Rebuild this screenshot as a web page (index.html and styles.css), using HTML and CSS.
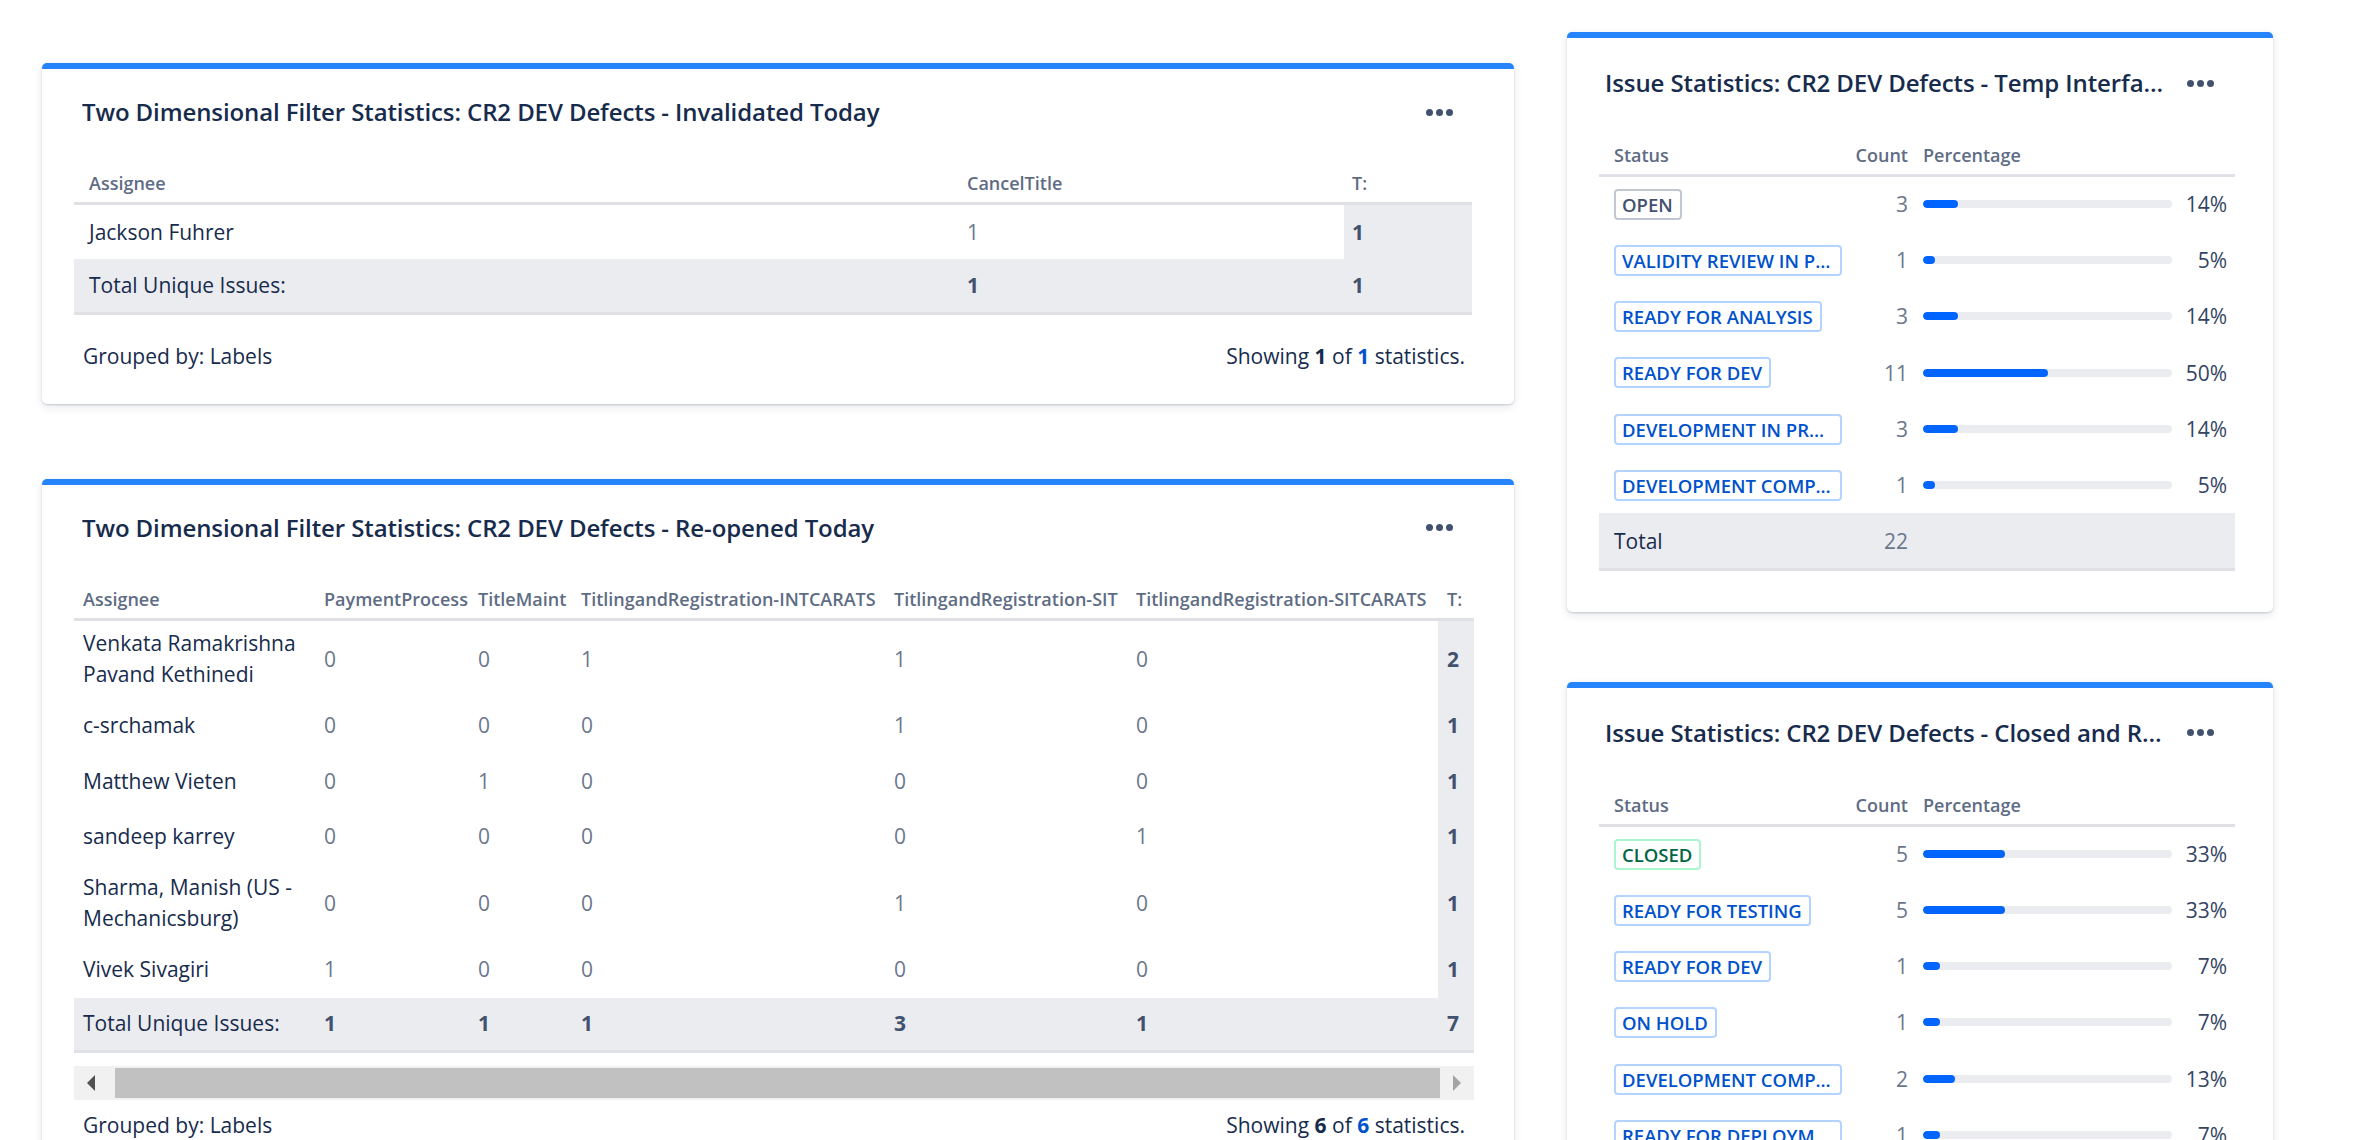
FILE: index.html
```html
<!DOCTYPE html>
<html lang="en">
<head>
<meta charset="utf-8">
<title>Dashboard</title>
<link rel="stylesheet" href="styles.css">
</head>
<body>
<div class="page">
  <div class="col col-left">
    <section class="card">
      <header class="card-head">
        <h2 class="card-title">Two Dimensional Filter Statistics: CR2 DEV Defects - Invalidated Today</h2>
        <span class="menu"><i></i><i></i><i></i></span>
      </header>
      <table class="tds tds-a">
        <colgroup><col class="a1"><col class="a2"><col class="a3"></colgroup>
        <thead>
          <tr><th>Assignee</th><th>CancelTitle</th><th class="t">T:</th></tr>
        </thead>
        <tbody>
          <tr><td class="name">Jackson Fuhrer</td><td class="num">1</td><td class="tot">1</td></tr>
          <tr class="total-row"><td class="name">Total Unique Issues:</td><td class="tot">1</td><td class="tot">1</td></tr>
        </tbody>
      </table>
      <div class="card-foot">
        <span>Grouped by: Labels</span>
        <span>Showing <b>1</b> of <b class="blue">1</b> statistics.</span>
      </div>
    </section>

    <section class="card">
      <header class="card-head">
        <h2 class="card-title">Two Dimensional Filter Statistics: CR2 DEV Defects - Re-opened Today</h2>
        <span class="menu"><i></i><i></i><i></i></span>
      </header>
      <table class="tds tds-b">
        <colgroup><col class="b1"><col class="b2"><col class="b3"><col class="b4"><col class="b5"><col class="b6"><col class="b7"></colgroup>
        <thead>
          <tr><th>Assignee</th><th>PaymentProcess</th><th>TitleMaint</th><th>TitlingandRegistration-INTCARATS</th><th>TitlingandRegistration-SIT</th><th>TitlingandRegistration-SITCARATS</th><th class="t">T:</th></tr>
        </thead>
        <tbody>
          <tr class="two"><td class="name">Venkata Ramakrishna Pavand Kethinedi</td><td class="num">0</td><td class="num">0</td><td class="num">1</td><td class="num">1</td><td class="num">0</td><td class="tot">2</td></tr>
          <tr><td class="name">c-srchamak</td><td class="num">0</td><td class="num">0</td><td class="num">0</td><td class="num">1</td><td class="num">0</td><td class="tot">1</td></tr>
          <tr><td class="name">Matthew Vieten</td><td class="num">0</td><td class="num">1</td><td class="num">0</td><td class="num">0</td><td class="num">0</td><td class="tot">1</td></tr>
          <tr><td class="name">sandeep karrey</td><td class="num">0</td><td class="num">0</td><td class="num">0</td><td class="num">0</td><td class="num">1</td><td class="tot">1</td></tr>
          <tr class="two"><td class="name">Sharma, Manish (US - Mechanicsburg)</td><td class="num">0</td><td class="num">0</td><td class="num">0</td><td class="num">1</td><td class="num">0</td><td class="tot">1</td></tr>
          <tr><td class="name">Vivek Sivagiri</td><td class="num">1</td><td class="num">0</td><td class="num">0</td><td class="num">0</td><td class="num">0</td><td class="tot">1</td></tr>
          <tr class="total-row"><td class="name">Total Unique Issues:</td><td class="tot">1</td><td class="tot">1</td><td class="tot">1</td><td class="tot">3</td><td class="tot">1</td><td class="tot">7</td></tr>
        </tbody>
      </table>
      <div class="hscroll">
        <span class="sb-btn sb-left"><i></i></span>
        <span class="sb-thumb"></span>
        <span class="sb-btn sb-right"><i></i></span>
      </div>
      <div class="card-foot card-foot-b">
        <span>Grouped by: Labels</span>
        <span>Showing <b>6</b> of <b class="blue">6</b> statistics.</span>
      </div>
    </section>
  </div>

  <div class="col col-right">
    <section class="card card-stats">
      <header class="card-head">
        <h2 class="card-title">Issue Statistics: CR2 DEV Defects - Temp Interface Defects</h2>
        <span class="menu"><i></i><i></i><i></i></span>
      </header>
      <table class="stats">
        <colgroup><col class="s1"><col class="s2"><col class="s3"></colgroup>
        <thead>
          <tr><th>Status</th><th class="cnt">Count</th><th class="pct">Percentage</th></tr>
        </thead>
        <tbody>
          <tr><td><span class="loz loz-grey">Open</span></td><td class="cnt">3</td><td class="pct"><div class="pbar"><span class="track"><span class="fill" style="width:14%"></span></span><span class="pv">14%</span></div></td></tr>
          <tr><td><span class="loz">Validity Review in Progress</span></td><td class="cnt">1</td><td class="pct"><div class="pbar"><span class="track"><span class="fill" style="width:5%"></span></span><span class="pv">5%</span></div></td></tr>
          <tr><td><span class="loz">Ready for Analysis</span></td><td class="cnt">3</td><td class="pct"><div class="pbar"><span class="track"><span class="fill" style="width:14%"></span></span><span class="pv">14%</span></div></td></tr>
          <tr><td><span class="loz">Ready for Dev</span></td><td class="cnt">11</td><td class="pct"><div class="pbar"><span class="track"><span class="fill" style="width:50%"></span></span><span class="pv">50%</span></div></td></tr>
          <tr><td><span class="loz">Development in Progress</span></td><td class="cnt">3</td><td class="pct"><div class="pbar"><span class="track"><span class="fill" style="width:14%"></span></span><span class="pv">14%</span></div></td></tr>
          <tr><td><span class="loz">Development Complete</span></td><td class="cnt">1</td><td class="pct"><div class="pbar"><span class="track"><span class="fill" style="width:5%"></span></span><span class="pv">5%</span></div></td></tr>
          <tr class="total-row"><td class="name">Total</td><td class="cnt">22</td><td></td></tr>
        </tbody>
      </table>
    </section>

    <section class="card card-stats">
      <header class="card-head">
        <h2 class="card-title">Issue Statistics: CR2 DEV Defects - Closed and Resolved</h2>
        <span class="menu"><i></i><i></i><i></i></span>
      </header>
      <table class="stats">
        <colgroup><col class="s1"><col class="s2"><col class="s3"></colgroup>
        <thead>
          <tr><th>Status</th><th class="cnt">Count</th><th class="pct">Percentage</th></tr>
        </thead>
        <tbody>
          <tr><td><span class="loz loz-green">Closed</span></td><td class="cnt">5</td><td class="pct"><div class="pbar"><span class="track"><span class="fill" style="width:33%"></span></span><span class="pv">33%</span></div></td></tr>
          <tr><td><span class="loz">Ready for Testing</span></td><td class="cnt">5</td><td class="pct"><div class="pbar"><span class="track"><span class="fill" style="width:33%"></span></span><span class="pv">33%</span></div></td></tr>
          <tr><td><span class="loz">Ready for Dev</span></td><td class="cnt">1</td><td class="pct"><div class="pbar"><span class="track"><span class="fill" style="width:7%"></span></span><span class="pv">7%</span></div></td></tr>
          <tr><td><span class="loz">On Hold</span></td><td class="cnt">1</td><td class="pct"><div class="pbar"><span class="track"><span class="fill" style="width:7%"></span></span><span class="pv">7%</span></div></td></tr>
          <tr><td><span class="loz">Development Complete</span></td><td class="cnt">2</td><td class="pct"><div class="pbar"><span class="track"><span class="fill" style="width:13%"></span></span><span class="pv">13%</span></div></td></tr>
          <tr><td><span class="loz">Ready for Deployment</span></td><td class="cnt">1</td><td class="pct"><div class="pbar"><span class="track"><span class="fill" style="width:7%"></span></span><span class="pv">7%</span></div></td></tr>
          <tr class="total-row"><td class="name">Total</td><td class="cnt">15</td><td></td></tr>
        </tbody>
      </table>
    </section>
  </div>
</div>
</body>
</html>
```

FILE: styles.css
```css
html, body {
  margin: 0;
  padding: 0;
  background: #ffffff;
  overflow: hidden;
}

body {
  font-family: "Open Sans", "Noto Sans", sans-serif;
  font-size: 21px;
  color: #172b4d;
}

.page {
  display: flex;
  align-items: flex-start;
  gap: 53px;
  padding-left: 42px;
  height: 1140px;
}

.col {
  display: flex;
  flex-direction: column;
  gap: 75px;
}

.col-left {
  width: 1472px;
  padding-top: 63px;
}

.col-right {
  width: 706px;
  padding-top: 32px;
  gap: 70px;
}

/* ---------- card ---------- */
.card {
  background: #fff;
  border-top: 6px solid #2684ff;
  border-radius: 5px;
  box-shadow: 0 1px 2px rgba(9, 30, 66, 0.18), 0 3px 10px rgba(9, 30, 66, 0.10);
  padding: 27px 40px 34px;
}

.card-stats {
  padding: 29px 38px 41px;
}

.card-head {
  display: flex;
  align-items: center;
  height: 32px;
  margin-right: 15px;
}

.card-title {
  flex: 1;
  min-width: 0;
  margin: 0 15px 0 0;
  font-size: 24px;
  font-weight: 600;
  line-height: 32px;
  letter-spacing: -0.1px;
  color: #172b4d;
  white-space: nowrap;
  overflow: hidden;
  text-overflow: ellipsis;
}

.menu {
  width: 40px;
  display: flex;
  justify-content: center;
  gap: 3px;
}

.menu i {
  width: 7px;
  height: 7px;
  border-radius: 50%;
  background: #42526e;
}

/* ---------- two dimensional tables ---------- */
.tds {
  border-collapse: collapse;
  table-layout: fixed;
  margin: 33px 0 0 -8px;
}

.tds-a { width: 1398px; }
.tds-b { width: 1400px; }

.a1 { width: 878px; }
.a2 { width: 392px; }
.a3 { width: 128px; }

.b1 { width: 241px; }
.b2 { width: 154px; }
.b3 { width: 103px; }
.b4 { width: 313px; }
.b5 { width: 242px; }
.b6 { width: 311px; }
.b7 { width: 36px; }

.tds th,
.stats th {
  text-align: left;
  font-size: 18px;
  font-weight: 600;
  line-height: 24px;
  color: #5e6c84;
  padding: 10px 0 7px;
  white-space: nowrap;
  border-bottom: 3px solid #dfe1e6;
}

.tds td {
  line-height: 31px;
  padding: 7.75px 0;
  vertical-align: middle;
}

.tds tbody tr { height: 55.5px; }

.tds-a th, .tds-a td { padding-left: 15px; }
.tds-a th.t, .tds-a td:last-child { padding-left: 8px; }
.tds-b th, .tds-b td { padding-left: 9px; }

.tds td.name { color: #172b4d; }
.tds td.num { color: #6b778c; }
.tds td.tot {
  background: #ebecf0;
  color: #42526e;
  font-weight: 700;
}

.tds tr.total-row { height: 54px; }
.tds tr.total-row td {
  background: #ebecf0;
  border-bottom: 3px solid #dfe1e6;
}

/* ---------- fake horizontal scrollbar ---------- */
.hscroll {
  display: flex;
  height: 34px;
  margin: 13px 0 0 -8px;
  width: 1400px;
  background: #f1f1f1;
}

.sb-btn {
  width: 34px;
  display: flex;
  align-items: center;
  justify-content: center;
}

.sb-left i {
  border-right: 8px solid #505050;
  border-top: 8px solid transparent;
  border-bottom: 8px solid transparent;
}

.sb-right i {
  border-left: 8px solid #a3a3a3;
  border-top: 8px solid transparent;
  border-bottom: 8px solid transparent;
}

.sb-thumb {
  flex: 1;
  margin: 2px 0 2px 7px;
  background: #c1c1c1;
}

/* ---------- footer ---------- */
.card-foot {
  display: flex;
  justify-content: space-between;
  line-height: 28px;
  margin-top: 27px;
  padding: 0 9px 0 1px;
  color: #172b4d;
}

.card-foot-b { margin-top: 11px; }

.card-foot b { font-weight: 700; }
.card-foot b.blue { color: #0052cc; }

/* ---------- issue statistics ---------- */
.stats {
  border-collapse: collapse;
  table-layout: fixed;
  width: 636px;
  margin: 34px 0 0 -6px;
}

.s1 { width: 241px; }
.s2 { width: 75px; }
.s3 { width: 320px; }

.stats th:first-child,
.stats td:first-child { padding-left: 15px; }

.stats th.cnt,
.stats td.cnt {
  text-align: right;
  padding-right: 7px;
}

.stats th.pct { padding-left: 8px; }
.stats td.pct { padding: 0 8px; }

.stats tbody tr { height: 56.3px; }

.stats td {
  vertical-align: middle;
  line-height: 28px;
  padding-top: 0;
  padding-bottom: 0;
}

.stats td.cnt { color: #6b778c; }

.stats tr.total-row { height: 56px; }
.stats tr.total-row td {
  background: #ebecf0;
  border-bottom: 3px solid #dfe1e6;
}
.stats tr.total-row td.name { color: #172b4d; }

.loz {
  display: inline-block;
  box-sizing: border-box;
  max-width: 228px;
  vertical-align: middle;
  border: 2px solid #b3d4ff;
  border-radius: 4px;
  padding: 0 7px 0 6px;
  font-size: 18.5px;
  font-weight: 600;
  line-height: 27px;
  text-transform: uppercase;
  color: #0052cc;
  white-space: nowrap;
  overflow: hidden;
  text-overflow: ellipsis;
}

.loz-grey {
  border-color: #c1c7d0;
  color: #42526e;
}

.loz-green {
  border-color: #abf5d1;
  color: #006644;
}

.pbar {
  display: flex;
  align-items: center;
}

.track {
  width: 249px;
  height: 8px;
  border-radius: 4px;
  background: #ebecf0;
  overflow: hidden;
}

.fill {
  display: block;
  height: 100%;
  border-radius: 4px;
  background: #0065ff;
}

.pv {
  flex: 1;
  text-align: right;
  color: #344563;
}
```
